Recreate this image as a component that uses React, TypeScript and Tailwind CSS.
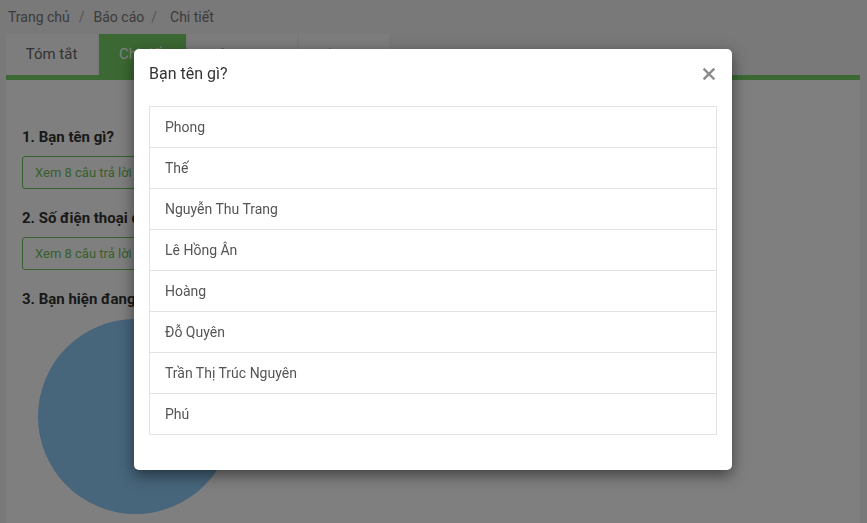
const names = [
  "Phong",
  "Thế",
  "Nguyễn Thu Trang",
  "Lê Hồng Ân",
  "Hoàng",
  "Đỗ Quyên",
  "Trần Thị Trúc Nguyên",
  "Phú",
]

function Question({ title }: { title: string }) {
  return (
    <div className="mb-[19px]">
      <div className="text-[15px] font-bold leading-5 text-[#333] mb-[9px] whitespace-nowrap">{title}</div>
      <button className="h-[33px] px-[12px] border border-[#6cc25a] rounded-[3px] text-[13px] text-[#6cc25a]">
        Xem 8 câu trả lời
      </button>
    </div>
  )
}

export default function App() {
  return (
    <div className="relative min-h-screen bg-[#f2f2f2] font-['Roboto',sans-serif] overflow-hidden">
      {/* page under the dialog */}
      <div className="pl-[6px] pr-[7px]">
        <div className="h-[34px] flex items-center pl-[2px] text-[14px] text-[#777]">
          <span>Trang chủ</span>
          <span className="mx-[9px] text-[#aaa]">/</span>
          <span>Báo cáo</span>
          <span className="mx-[7px] text-[#aaa]">/</span>
          <span className="ml-[6px]">Chi tiết</span>
        </div>
        <div className="flex h-[41px]">
          <div className="w-[91px] mr-[2px] bg-[#fafafa] flex items-center justify-center text-[15px] text-[#666]">Tóm tắt</div>
          <div className="w-[87px] mr-[2px] bg-[#78d266] flex items-center justify-center text-[15px] text-white">Chi tiết</div>
          <div className="w-[109px] mr-[2px] bg-[#fafafa] flex items-center justify-center pt-[3px] text-[15px] text-[#666]">Tổng quan</div>
          <div className="w-[90px] bg-[#fafafa] flex items-center justify-center pt-[3px] text-[15px] text-[#666]">Xuất dữ liệu</div>
        </div>
        <div className="h-[5px] bg-[#78d266]" />
        <div className="bg-white min-h-[460px] pt-[47px] px-[16px]">
          <Question title="1. Bạn tên gì?" />
          <Question title="2. Số điện thoại của bạn?" />
          <div className="text-[15px] font-bold leading-5 text-[#333] whitespace-nowrap">3. Bạn hiện đang làm gì?</div>
          <svg width="200" height="200" className="mt-[10px] ml-[16px]">
            <circle cx="97.5" cy="97.5" r="97.5" fill="#8ecaf6" />
          </svg>
        </div>
      </div>

      {/* backdrop */}
      <div className="fixed inset-0 bg-black/50" />

      {/* dialog */}
      <div className="fixed left-[134px] top-[49px] w-[598px] bg-white rounded-[5px] shadow-[0_5px_15px_rgba(0,0,0,0.5)]">
        <div className="h-[57px] flex items-start justify-between px-[15px] pt-[15px]">
          <span className="text-[16px] leading-[19px] text-[#333]">Bạn tên gì?</span>
          <svg width="12" height="12" viewBox="0 0 12 12" className="mr-[2px] mt-[4px]">
            <path d="M1.5 1.5 L10.5 10.5 M10.5 1.5 L1.5 10.5" stroke="#8a8a8a" strokeWidth="2.4" strokeLinecap="square" />
          </svg>
        </div>
        <div className="px-[15px] pb-[35px]">
          <ul className="border border-[#e3e3e3]">
            {names.map((n, i) =>
              i === 0 ? (
                <li key={n} className="h-[40px] flex items-center px-[15px] text-[14px] text-[#555]">
                  {n}
                </li>
              ) : (
                <li key={n} className="h-[41px] flex items-center px-[15px] text-[14px] text-[#555] border-t border-[#e3e3e3]">
                  {n}
                </li>
              )
            )}
          </ul>
        </div>
      </div>
    </div>
  )
}
